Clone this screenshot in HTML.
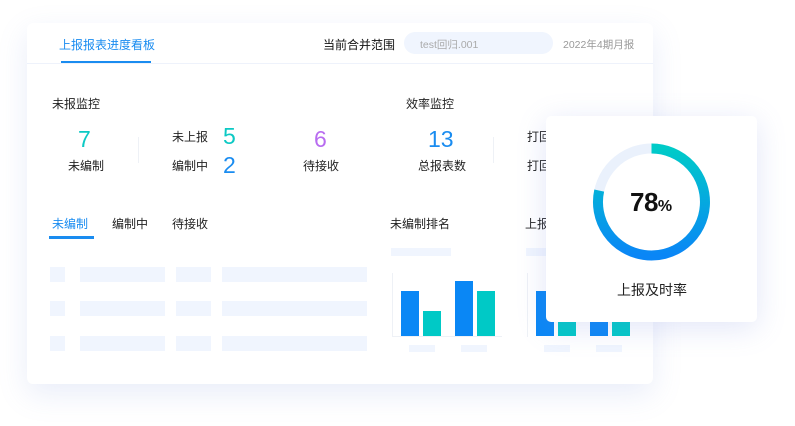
<!DOCTYPE html>
<html><head><meta charset="utf-8"><style>
*{margin:0;padding:0;box-sizing:border-box}
body{width:795px;height:426px;background:#fff;position:relative;overflow:hidden;font-family:"Liberation Sans","Noto Sans CJK SC",sans-serif;color:#222}
.a{position:absolute;white-space:nowrap}
.card{position:absolute;left:27px;top:23px;width:626px;height:361px;background:#fff;border-radius:6px;box-shadow:0 10px 30px rgba(120,140,220,0.16)}
.pop{position:absolute;left:546px;top:116px;width:211px;height:206px;background:#fff;border-radius:5px;box-shadow:0 6px 30px rgba(110,130,220,0.2)}
.sk{position:absolute;background:#f0f5fe}
.t13{font-size:12px}
.num{font-size:23px;font-weight:300;line-height:1}
.gy{color:#999;font-size:10.5px}
</style></head><body>
<div class="card"></div>
<!-- header -->
<div class="a t13" style="left:59px;top:36px;color:#1a8cf0">上报报表进度看板</div>
<div style="position:absolute;left:61px;top:61px;width:90px;height:2px;background:#1a8cf0"></div>
<div style="position:absolute;left:27px;top:63px;width:626px;height:1px;background:#eef2fb"></div>
<div class="a t13" style="left:323px;top:36px;color:#111">当前合并范围</div>
<div style="position:absolute;left:404px;top:32px;width:149px;height:22px;border-radius:11px;background:#f0f5fe"></div>
<div class="a gy" style="left:420px;top:37px;color:#aaa">test回归.001</div>
<div class="a gy" style="left:563px;top:37px">2022年4期月报</div>
<!-- stats -->
<div class="a t13" style="left:52px;top:95px">未报监控</div>
<div class="a num" style="left:78px;top:128px;color:#0cc9c4">7</div>
<div class="a t13" style="left:68px;top:157px">未编制</div>
<div style="position:absolute;left:138px;top:137px;width:1px;height:26px;background:#eef1f6"></div>
<div class="a t13" style="left:172px;top:128px">未上报</div>
<div class="a num" style="left:223px;top:125px;color:#0cc9c4">5</div>
<div class="a t13" style="left:172px;top:157px">编制中</div>
<div class="a num" style="left:223px;top:154px;color:#1a8cf0">2</div>
<div class="a num" style="left:314px;top:128px;color:#b86cf0">6</div>
<div class="a t13" style="left:303px;top:157px">待接收</div>
<div class="a t13" style="left:406px;top:95px">效率监控</div>
<div class="a num" style="left:428px;top:128px;color:#1a8cf0">13</div>
<div class="a t13" style="left:418px;top:157px">总报表数</div>
<div style="position:absolute;left:493px;top:137px;width:1px;height:26px;background:#eef1f6"></div>
<div class="a t13" style="left:527px;top:128px">打回</div>
<div class="a t13" style="left:527px;top:157px">打回</div>
<!-- tabs -->
<div class="a t13" style="left:52px;top:215px;color:#1a8cf0">未编制</div>
<div class="a t13" style="left:112px;top:215px">编制中</div>
<div class="a t13" style="left:172px;top:215px">待接收</div>
<div style="position:absolute;left:49px;top:236px;width:45px;height:3px;background:#1a8cf0"></div>
<!-- table skeleton -->
<div class="sk" style="left:50px;top:267px;width:15px;height:15px"></div><div class="sk" style="left:80px;top:267px;width:85px;height:15px"></div><div class="sk" style="left:176px;top:267px;width:35px;height:15px"></div><div class="sk" style="left:222px;top:267px;width:145px;height:15px"></div>
<div class="sk" style="left:50px;top:301px;width:15px;height:15px"></div><div class="sk" style="left:80px;top:301px;width:85px;height:15px"></div><div class="sk" style="left:176px;top:301px;width:35px;height:15px"></div><div class="sk" style="left:222px;top:301px;width:145px;height:15px"></div>
<div class="sk" style="left:50px;top:336px;width:15px;height:15px"></div><div class="sk" style="left:80px;top:336px;width:85px;height:15px"></div><div class="sk" style="left:176px;top:336px;width:35px;height:15px"></div><div class="sk" style="left:222px;top:336px;width:145px;height:15px"></div>
<!-- chart 1 -->
<div class="a t13" style="left:390px;top:215px">未编制排名</div>
<div class="sk" style="left:391px;top:248px;width:60px;height:8px"></div>
<div style="position:absolute;left:392px;top:273px;width:1px;height:64px;background:#eef1f6"></div>
<div style="position:absolute;left:392px;top:336px;width:110px;height:1px;background:#eef1f6"></div>
<div style="position:absolute;left:401px;top:291px;width:18px;height:45px;background:#0a87f5"></div>
<div style="position:absolute;left:423px;top:311px;width:18px;height:25px;background:#00c9c6"></div>
<div style="position:absolute;left:455px;top:281px;width:18px;height:55px;background:#0a87f5"></div>
<div style="position:absolute;left:477px;top:291px;width:18px;height:45px;background:#00c9c6"></div>
<div class="sk" style="left:409px;top:345px;width:26px;height:7px"></div>
<div class="sk" style="left:461px;top:345px;width:26px;height:7px"></div>
<!-- chart 2 -->
<div class="a t13" style="left:525px;top:215px">上报</div>
<div class="sk" style="left:526px;top:248px;width:25px;height:8px"></div>
<div style="position:absolute;left:527px;top:273px;width:1px;height:64px;background:#eef1f6"></div>
<div style="position:absolute;left:536px;top:291px;width:18px;height:45px;background:#0a87f5"></div>
<div style="position:absolute;left:558px;top:311px;width:18px;height:25px;background:#00c9c6"></div>
<div style="position:absolute;left:590px;top:300px;width:18px;height:36px;background:#0a87f5"></div>
<div style="position:absolute;left:612px;top:300px;width:18px;height:36px;background:#00c9c6"></div>
<div class="sk" style="left:544px;top:345px;width:26px;height:7px"></div>
<div class="sk" style="left:596px;top:345px;width:26px;height:7px"></div>
<!-- popup -->
<div class="pop"></div>
<svg style="position:absolute;left:546px;top:116px" width="211" height="206" viewBox="0 0 211 206">
<defs><linearGradient id="g" x1="0" y1="0" x2="0" y2="1"><stop offset="0" stop-color="#00cbc8"/><stop offset="1" stop-color="#0a86f6"/></linearGradient></defs>
<circle cx="105.5" cy="86" r="53.5" fill="none" stroke="#eaf1fc" stroke-width="10"/>
<path d="M105.5 32.5 A53.5 53.5 0 1 1 53.2 74.6" fill="none" stroke="url(#g)" stroke-width="10"/>
</svg>
<div class="a" style="left:630px;top:187px;font-size:26px;font-weight:bold;color:#111;letter-spacing:-0.5px">78<span style="font-size:16px">%</span></div>
<div class="a" style="left:617px;top:280px;font-size:14px;color:#222">上报及时率</div>
</body></html>
